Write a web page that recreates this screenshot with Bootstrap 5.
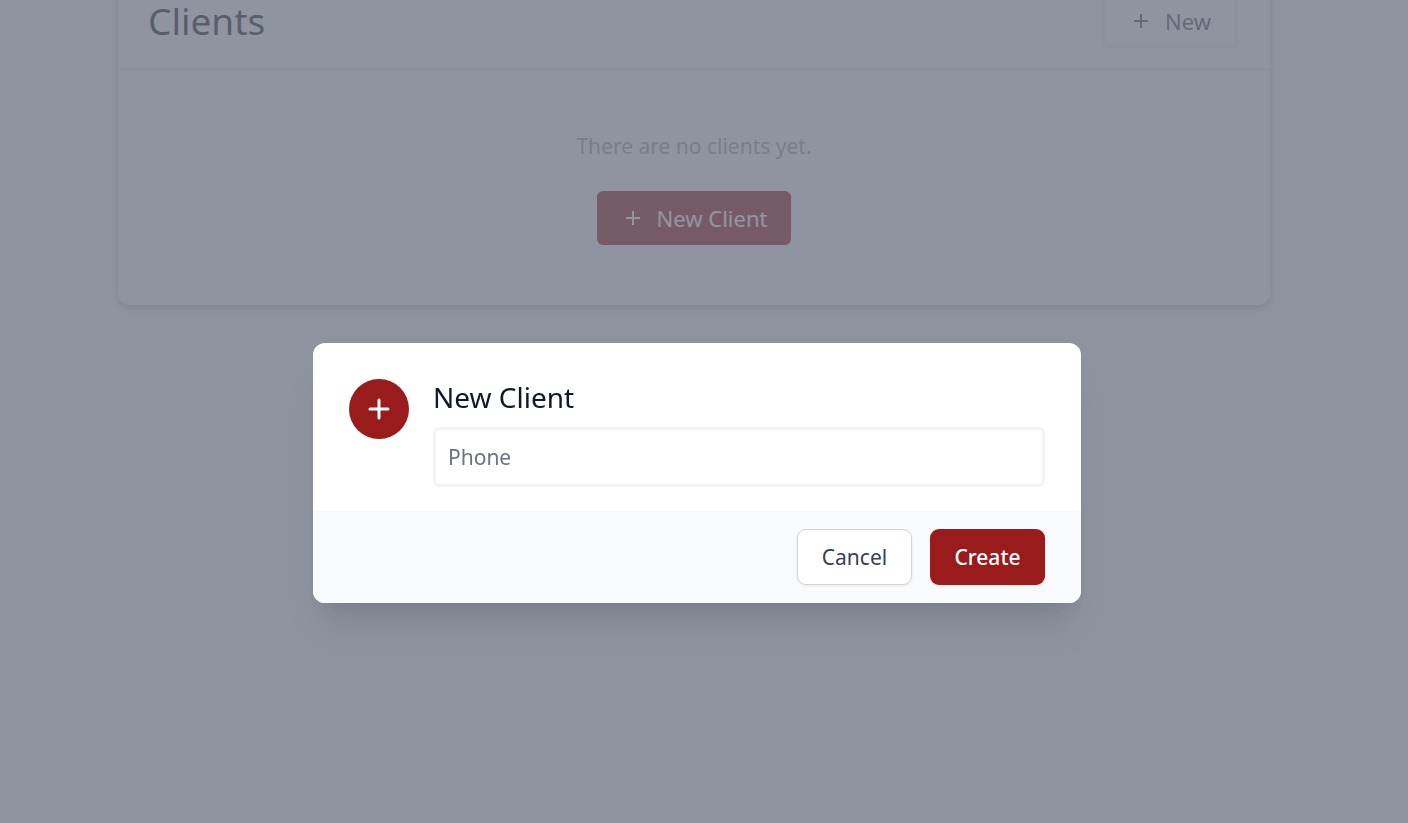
<!DOCTYPE html>
<html lang="en">
<head>
<meta charset="utf-8">
<meta name="viewport" content="width=device-width, initial-scale=1">
<title>Clients</title>
<link href="https://cdn.jsdelivr.net/npm/bootstrap@5.3.0/dist/css/bootstrap.min.css" rel="stylesheet">
<style>
  body { font-family: "Noto Sans", "Open Sans", sans-serif; font-size: 21px; line-height: 30px; background: #f8fafc; color: #111827; overflow: hidden; }
  .page { padding: 0 20px 0 0; }
  .clients-card { max-width: 1152px; margin-top: -26px; border: 0; border-radius: 12px; background: #fcfffd; box-shadow: 0 0 6px rgba(0,0,0,.1), 0 5px 9px rgba(0,0,0,.16); }
  .clients-card .card-header { padding: 20px 32px 20px 30px; background: none; border-bottom: 3px solid #eceef2; }
  .clients-card h1 { font-size: 37px; line-height: 54px; font-weight: 400; color: #1f2937; }
  .clients-card .card-body { padding: 60px 30px; }
  .empty-note { color: #9ca3af; margin-bottom: 30px; }
  .btn { font-size: 21px; line-height: 30px; }
  .clients-card .btn { font-size: 22px; }
  .btn-new { padding: 9px 24px; gap: 12px; border: 3px solid #eceef2; border-radius: 6px; color: #4b5563; }
  .btn-new-client { padding: 12px 24px; gap: 12px; border: 0; border-radius: 6px; background: #991b1b; color: #fff; }
  .plus-small { width: 24px; height: 24px; }
  .modal-backdrop { --bs-backdrop-bg: #6b7280; --bs-backdrop-opacity: .75; }
  .client-modal { padding: 123px 14px 0 0; }
  .client-modal .modal-dialog { max-width: 768px; min-height: 100%; margin: 0 auto; }
  .client-modal .modal-content { border: 0; border-radius: 12px; overflow: hidden; box-shadow: 0 30px 38px -8px rgba(0,0,0,.11), 0 15px 15px -8px rgba(0,0,0,.04); }
  .client-modal .modal-body { padding: 36px 36px 24px; gap: 24px; }
  .plus-disc { width: 60px; height: 60px; background: #991b1b; color: #fff; }
  .client-modal h2 { font-size: 28px; line-height: 36px; font-weight: 400; margin-bottom: 12px; }
  .client-modal .form-control { height: 60px; padding: 0 12px; border: 3px solid #f3f4f6; border-radius: 6px; font-size: 21px; }
  .client-modal .form-control::placeholder { color: #6b7280; }
  .client-modal .modal-footer { padding: 18px 36px; gap: 18px; border: 0; background: #f8fafc; border-radius: 0; }
  .client-modal .modal-footer .btn { margin: 0; min-width: 115px; height: 56px; padding: 0 22px; border-radius: 9px; box-shadow: 0 1px 3px rgba(0,0,0,.08); }
  .btn-cancel { background: #fff; border: 1px solid #d1d5db; color: #374151; }
  .client-modal .btn-create { background: #991b1b; border: 0; color: #fff; font-weight: 500; }
</style>
</head>
<body>
<main class="page min-vh-100 d-flex flex-column">
  <section class="card clients-card mx-auto w-100">
    <div class="card-header d-flex justify-content-between align-items-center">
      <h1 class="mb-0">Clients</h1>
      <button type="button" class="btn btn-new d-flex align-items-center">
        <svg class="plus-small" viewBox="0 0 24 24" fill="none" stroke="currentColor" stroke-width="2" aria-hidden="true"><path d="M12 5v14M5 12h14"/></svg>New
      </button>
    </div>
    <div class="card-body d-flex flex-column align-items-center">
      <p class="empty-note">There are no clients yet.</p>
      <button type="button" class="btn btn-new-client d-flex align-items-center">
        <svg class="plus-small" viewBox="0 0 24 24" fill="none" stroke="currentColor" stroke-width="2" aria-hidden="true"><path d="M12 5v14M5 12h14"/></svg>New Client
      </button>
    </div>
  </section>
</main>

<div class="modal-backdrop show"></div>
<div class="modal client-modal d-block" role="dialog" aria-modal="true" aria-labelledby="modalTitle">
  <div class="modal-dialog d-flex align-items-center">
    <form class="modal-content">
      <div class="modal-body d-flex align-items-start">
        <span class="plus-disc rounded-circle d-flex align-items-center justify-content-center flex-shrink-0">
          <svg width="30" height="30" viewBox="0 0 30 30" fill="none" stroke="currentColor" stroke-width="3" stroke-linecap="round" aria-hidden="true"><path d="M15 6v18M6 15h18"/></svg>
        </span>
        <div class="flex-grow-1">
          <h2 id="modalTitle">New Client</h2>
          <input type="tel" class="form-control" placeholder="Phone" aria-label="Phone">
        </div>
      </div>
      <div class="modal-footer">
        <button type="button" class="btn btn-cancel">Cancel</button>
        <button type="submit" class="btn btn-create">Create</button>
      </div>
    </form>
  </div>
</div>
<script src="https://cdn.jsdelivr.net/npm/bootstrap@5.3.0/dist/js/bootstrap.bundle.min.js"></script>
</body>
</html>
